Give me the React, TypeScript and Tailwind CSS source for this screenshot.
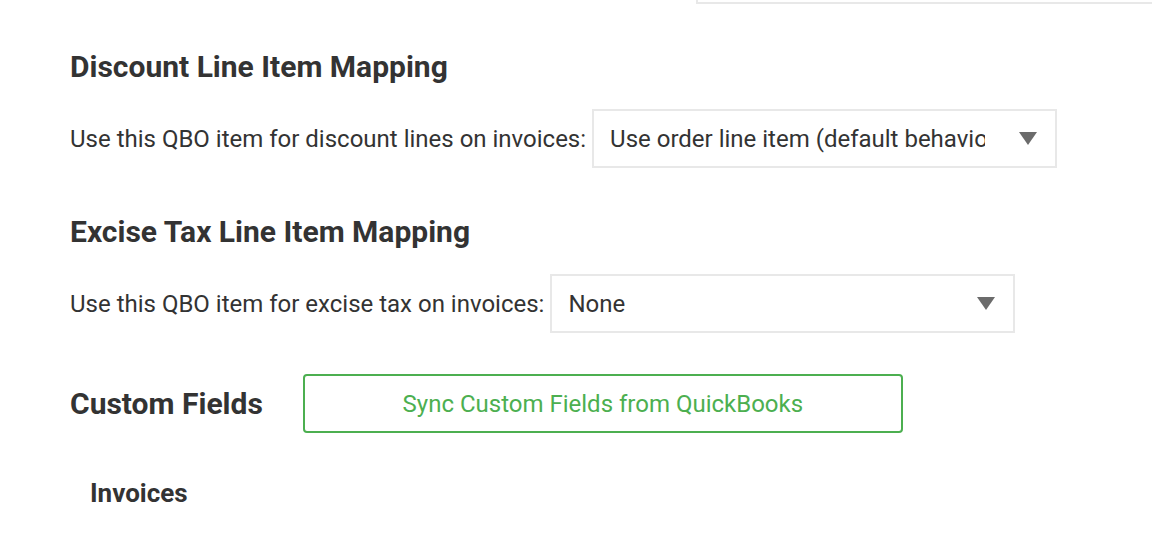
import type { ReactNode } from "react";

// Downward caret used by the native-looking selects.
function Caret() {
  return (
    <svg width="18" height="13" viewBox="0 0 18 13" aria-hidden="true" className="shrink-0">
      <polygon points="0,0 18,0 9,13" fill="#6b6b6b" />
    </svg>
  );
}

function SelectBox({ value }: { value: string }) {
  return (
    <div className="flex h-[59px] w-[465px] shrink-0 items-center border-2 border-[#e8e8e8] bg-white pl-[16px] pr-[18px]">
      <span className="mr-[34px] flex-1 overflow-hidden whitespace-nowrap text-[24px] text-[#333]">
        {value}
      </span>
      <Caret />
    </div>
  );
}

function SectionTitle({ children, className = "" }: { children: ReactNode; className?: string }) {
  return (
    <h2 className={`text-[30px] font-bold leading-[36px] text-[#333] ${className}`}>{children}</h2>
  );
}

function MappingRow({ label, value }: { label: string; value: string }) {
  return (
    <div className="mt-[24px] flex items-center gap-[6px]">
      <label className="text-[24px] text-[#333]">{label}</label>
      <SelectBox value={value} />
    </div>
  );
}

export default function App() {
  return (
    <div className="min-h-[544px] overflow-hidden bg-white pl-[70px] font-['Roboto',sans-serif]">
      {/* tail of the field above this block */}
      <div className="ml-[626px] h-[4px] border-b-2 border-l-2 border-[#e8e8e8]" />

      <SectionTitle className="mt-[45px]">Discount Line Item Mapping</SectionTitle>
      <MappingRow
        label="Use this QBO item for discount lines on invoices:"
        value="Use order line item (default behavior)"
      />

      <SectionTitle className="mt-[46px]">Excise Tax Line Item Mapping</SectionTitle>
      <MappingRow label="Use this QBO item for excise tax on invoices:" value="None" />

      <div className="mt-[41px] flex items-center gap-[40px]">
        <SectionTitle>Custom Fields</SectionTitle>
        <button
          type="button"
          className="h-[59px] w-[600px] rounded-[4px] border-2 border-[#4caf50] bg-white text-[24px] text-[#4caf50]"
        >
          Sync Custom Fields from QuickBooks
        </button>
      </div>

      <h3 className="mt-[46px] pl-[20px] text-[26px] font-bold leading-[28px] text-[#333]">Invoices</h3>
    </div>
  );
}
